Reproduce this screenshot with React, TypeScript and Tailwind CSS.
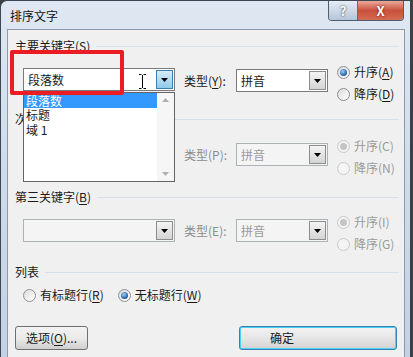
import React from "react";

const FONT = { fontFamily: '"Noto Sans CJK SC", "Noto Sans", sans-serif' };

const Radio = ({ checked = false, disabled = false }) => (
  <span
    className={
      "relative flex h-[13px] w-[13px] shrink-0 items-center justify-center rounded-full border " +
      (disabled
        ? "border-[#c6c9cc] bg-[#f4f4f4]"
        : "border-[#8e8f8f] bg-gradient-to-br from-[#dcdcdc] to-[#ffffff]")
    }
  >
    {checked && (
      <span
        className={
          "h-[7px] w-[7px] rounded-full " +
          (disabled
            ? "bg-[#c4c4c4]"
            : "bg-[radial-gradient(circle_at_40%_35%,#9fd0f5,#2a6bb0_60%,#0d3f7a)]")
        }
      />
    )}
  </span>
);

const RadioItem = ({ label, mnemonic, checked = false, disabled = false }) => (
  <div className="flex h-[22px] items-center gap-[4px]">
    <Radio checked={checked} disabled={disabled} />
    <span className={disabled ? "text-[#9a9a9a]" : "text-[#1a1a1a]"}>
      {label}(
      {disabled ? mnemonic : <span className="underline underline-offset-2">{mnemonic}</span>})
    </span>
  </div>
);

const Arrow = () => (
  <svg width="7" height="4" viewBox="0 0 7 4">
    <path d="M0 0h7L3.5 4z" fill="#000" />
  </svg>
);

const Combo = ({ width, text = "", disabled = false }) => (
  <div
    className={
      "flex h-[23px] items-center border p-px " +
      (disabled ? "border-[#adb2b5] bg-[#f4f4f4]" : "border-[#7a7a7a] bg-white") +
      " " +
      width
    }
  >
    <span className={"flex-1 pl-[3px] " + (disabled ? "text-[#9a9a9a]" : "text-[#1a1a1a]")}>
      {text}
    </span>
    <span className="flex h-full w-[17px] items-center justify-center border border-[#8d8d8d] bg-gradient-to-b from-[#f4f4f4] to-[#d4d4d4]">
      <Arrow />
    </span>
  </div>
);

const GroupHeader = ({ children, className = "" }) => (
  <div className={"flex h-[16px] items-center " + className}>
    <span className="text-[#1a1a1a]">{children}</span>
    <span className="ml-[6px] mr-[5px] h-px flex-1 bg-[#d8dfe6]" />
  </div>
);

const U = ({ children }) => <span className="underline underline-offset-2">{children}</span>;

const KeyRow = ({ typeMnemonic, up, down, disabled, first = false, className = "" }) => (
  <div className={"flex h-[44px] items-start " + className}>
    <div className="ml-[8px] mt-[8px] flex items-center">
      {first ? (
        <div className="h-[23px] w-[152px]" />
      ) : (
        <Combo width="w-[152px]" disabled />
      )}
      <span className={"ml-[9px] w-[52px] " + (disabled ? "text-[#8d8d8d]" : "text-[#1a1a1a]")}>
        类型({disabled ? typeMnemonic : <U>{typeMnemonic}</U>}):
      </span>
      <Combo width="w-[92px]" text="拼音" disabled={disabled} />
    </div>
    <div className="ml-[9px] flex flex-col">
      <RadioItem label="升序" mnemonic={up} checked disabled={disabled} />
      <RadioItem label="降序" mnemonic={down} disabled={disabled} />
    </div>
  </div>
);

export default function App() {
  return (
    <div className="relative h-[357px] w-[413px] overflow-hidden bg-[#3d4146] text-[12px] leading-[16px]" style={FONT}>
      <div className="flex h-full w-[410px] flex-col rounded-tl-[7px] border-l border-t border-[#3c4654] bg-gradient-to-b from-[#dfe8f2] via-[#cddbea] to-[#c3d2e3]">
        {/* title bar */}
        <div className="flex h-[28px] items-start">
          <span className="ml-[9px] mt-[7px] text-[#111]">排序文字</span>
          <div className="ml-auto mr-[6px] flex h-[20px] overflow-hidden rounded-b-[4px] border border-t-0 border-[#4e5d70]">
            <span className="flex w-[29px] items-center justify-center border-r border-[#5e6d80] bg-gradient-to-b from-[#e6edf5] to-[#b5c5d8] text-[13px] font-bold text-white [text-shadow:0_0_2px_#222]">
              ?
            </span>
            <span className="flex w-[45px] items-center justify-center bg-gradient-to-b from-[#e9a99c] via-[#c9503c] to-[#d46a52] text-[13px] font-bold text-white [text-shadow:0_0_2px_#400]">
              X
            </span>
          </div>
        </div>
        {/* client */}
        <div className="ml-[6px] mr-[5px] flex flex-1 flex-col border border-b-0 border-[#8a9bb0] bg-[#f0f0f0] pl-[7px]">
          <GroupHeader className="mt-[8px]">
            主要关键字(<U>S</U>)
          </GroupHeader>
          <KeyRow first typeMnemonic="Y" up="A" down="D" className="mt-[7px]" />
          <GroupHeader className="mt-[6px]">
            次要关键字(<U>T</U>)
          </GroupHeader>
          <KeyRow typeMnemonic="P" up="C" down="N" disabled className="mt-[8px]" />
          <GroupHeader className="mt-[10px]">
            第三关键字(<U>B</U>)
          </GroupHeader>
          <KeyRow typeMnemonic="E" up="I" down="G" disabled className="mt-[6px]" />
          <GroupHeader className="mt-[9px]">列表</GroupHeader>
          <div className="ml-[8px] mt-[4px] flex items-center">
            <RadioItem label="有标题行" mnemonic="R" />
            <span className="ml-[14px]">
              <RadioItem label="无标题行" mnemonic="W" checked />
            </span>
          </div>
          <div className="mt-[20px] flex items-center">
            <button className="h-[24px] w-[73px] rounded-[3px] border border-[#707070] bg-gradient-to-b from-[#f2f2f2] via-[#ebebeb] to-[#cfcfcf] text-[#1a1a1a]">
              选项(<U>O</U>)...
            </button>
            <button className="ml-[151px] h-[24px] w-[158px] rounded-[3px] border border-[#3c7fb1] bg-gradient-to-b from-[#f3f3f3] via-[#e6e6e6] to-[#d2d2d2] pl-[30px] text-left text-[#1a1a1a] shadow-[inset_0_0_0_1px_#48d0f5]">
              确定
            </button>
          </div>
        </div>
      </div>

      {/* primary key combo with I-beam cursor */}
      <div className="absolute left-[23px] top-[68px]">
        <div className="flex h-[23px] w-[152px] items-center border border-[#7a7a7a] bg-white p-px">
          <span className="flex-1 pl-[3px] text-[#1a1a1a]">段落数</span>
          <span className="flex h-full w-[17px] items-center justify-center border border-[#3c7fb1] bg-gradient-to-b from-[#d5eefb] to-[#8fcbeb]">
            <Arrow />
          </span>
        </div>
        <svg className="absolute left-[116px] top-[6px]" width="7" height="15" viewBox="0 0 7 15">
          <path d="M0 .5h2.5M4.5 .5H7M3.5 1v13M0 14.5h2.5M4.5 14.5H7" stroke="#000" strokeWidth="1" fill="none" />
        </svg>
      </div>

      {/* open dropdown list */}
      <div className="absolute left-[23px] top-[92px] flex h-[90px] w-[152px] border border-[#646464] bg-white">
        <div className="flex flex-1 flex-col">
          <div className="h-[15px] bg-[#3399ff] pl-[2px] leading-[15px] text-white">段落数</div>
          <div className="h-[14px] pl-[2px] leading-[14px] text-[#1a1a1a]">标题</div>
          <div className="h-[15px] pl-[2px] leading-[15px] text-[#1a1a1a]">域 1</div>
        </div>
        <div className="flex w-[17px] flex-col items-center justify-between bg-[#f6f6f6] py-[5px]">
          <svg width="7" height="4" viewBox="0 0 7 4">
            <path d="M0 4h7L3.5 0z" fill="#b0b0b0" />
          </svg>
          <svg width="7" height="4" viewBox="0 0 7 4">
            <path d="M0 0h7L3.5 4z" fill="#b0b0b0" />
          </svg>
        </div>
      </div>

      {/* red highlight box */}
      <div className="absolute left-[10px] top-[50px] h-[45px] w-[114px] rounded-[2px] border-4 border-[#ec1c24]" />
    </div>
  );
}
